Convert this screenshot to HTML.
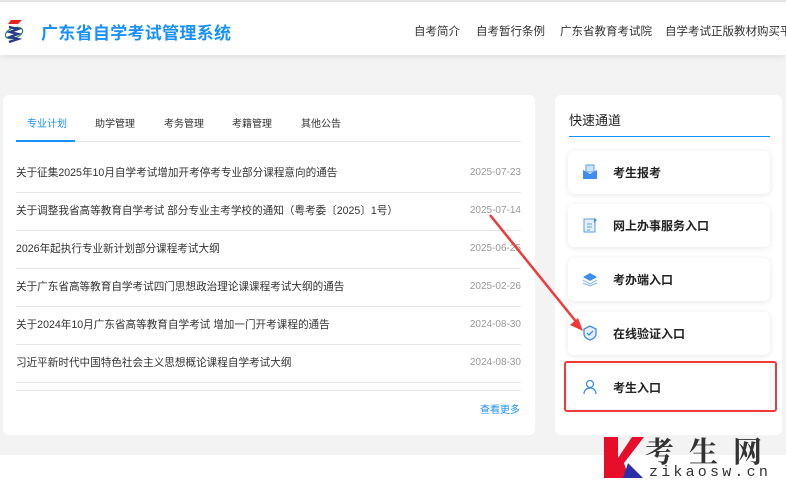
<!DOCTYPE html>
<html><head><meta charset="utf-8"><style>
*{margin:0;padding:0;box-sizing:border-box}
body{width:786px;height:493px;overflow:hidden;background:#fff;font-family:"Liberation Sans","Noto Sans CJK SC",sans-serif;position:relative}
.bg{position:absolute;left:0;top:55px;width:786px;height:400px;background:#f3f3f3}
.hdr{position:absolute;left:0;top:0;width:786px;height:55px;background:#fff;border-top:2px solid #e4e4e4;box-shadow:0 2px 6px rgba(0,0,0,.08)}
.title{position:absolute;left:41px;top:17px;font-size:17px;color:#1890ff;font-weight:bold;letter-spacing:.3px}
.nav{position:absolute;top:21px;font-size:11.5px;color:#333;white-space:nowrap}
.card{position:absolute;background:#fff;border-radius:6px}
.tab{position:absolute;top:115px;font-size:10px;color:#333}
.row{position:absolute;left:16px;width:505px;height:38px;border-bottom:1px solid #e6e6e6;font-size:10.6px;color:#333}
.row span{position:absolute;left:0;top:10px}
.row i{position:absolute;right:0;top:12px;font-style:normal;color:#999;font-size:10px}
.btn{position:absolute;left:568px;width:202px;height:43px;background:#fff;border-radius:6px;box-shadow:0 1px 6px rgba(0,0,0,.1);font-size:12px;color:#222;font-weight:bold}
.btn span{position:absolute;left:45px;top:13px}
.btn svg{position:absolute;left:14px;top:13px}
</style></head><body>
<div class="bg"></div>
<div class="hdr">
<svg style="position:absolute;left:3px;top:17px" width="22" height="24" viewBox="0 0 22 24"><path d="M8 1h11l-4 4H5z" fill="#e52521"/><ellipse cx="11" cy="14" rx="9" ry="5" fill="none" stroke="#2a8a4a" stroke-width="1.2" transform="rotate(-20 11 14)"/><path d="M6 8l9 2-8 3 8 2-8 3 8 2-9 3" fill="none" stroke="#2b3a8c" stroke-width="2.4"/></svg>
<div class="title">广东省自学考试管理系统</div>
<div class="nav" style="left:414px">自考简介</div>
<div class="nav" style="left:476px">自考暂行条例</div>
<div class="nav" style="left:560px">广东省教育考试院</div>
<div class="nav" style="left:665px">自学考试正版教材购买平台</div>
</div>
<div class="card" style="left:3px;top:95px;width:532px;height:340px"></div>
<div class="tab" style="left:27px;color:#1890ff">专业计划</div>
<div class="tab" style="left:95px">助学管理</div>
<div class="tab" style="left:164px">考务管理</div>
<div class="tab" style="left:232px">考籍管理</div>
<div class="tab" style="left:301px">其他公告</div>
<div style="position:absolute;left:16px;top:141px;width:505px;height:1px;background:#e6e6e6"></div>
<div style="position:absolute;left:16px;top:140px;width:59px;height:2px;background:#1890ff"></div>
<div class="row" style="top:155px"><span>关于征集2025年10月自学考试增加开考停考专业部分课程意向的通告</span><i>2025-07-23</i></div>
<div class="row" style="top:193px"><span>关于调整我省高等教育自学考试 部分专业主考学校的通知（粤考委〔2025〕1号）</span><i>2025-07-14</i></div>
<div class="row" style="top:231px"><span>2026年起执行专业新计划部分课程考试大纲</span><i>2025-06-25</i></div>
<div class="row" style="top:269px"><span>关于广东省高等教育自学考试四门思想政治理论课课程考试大纲的通告</span><i>2025-02-26</i></div>
<div class="row" style="top:307px"><span>关于2024年10月广东省高等教育自学考试 增加一门开考课程的通告</span><i>2024-08-30</i></div>
<div class="row" style="top:345px"><span>习近平新时代中国特色社会主义思想概论课程自学考试大纲</span><i>2024-08-30</i></div>
<div style="position:absolute;left:16px;top:390px;width:505px;height:1px;background:#e6e6e6"></div>
<div style="position:absolute;left:480px;top:401px;font-size:10px;color:#1890ff">查看更多</div>

<div class="card" style="left:555px;top:95px;width:227px;height:340px"></div>
<div style="position:absolute;left:569px;top:110px;font-size:13px;color:#222">快速通道</div>
<div style="position:absolute;left:569px;top:136px;width:201px;height:1px;background:#1890ff"></div>
<div class="btn" style="top:151px"><svg width="16" height="16"><rect x="4" y="1" width="8" height="7" fill="#cfe3fb" stroke="#5a9cf0"/><path d="M1 6l7 4 7-4v9H1z" fill="#3f8df0"/></svg><span>考生报考</span></div>
<div class="btn" style="top:204px"><svg width="16" height="16"><rect x="2" y="2" width="11" height="13" fill="#e6f0fd" stroke="#5a9cf0"/><path d="M5 7h5M5 10h5M5 13h3" stroke="#5a9cf0"/><path d="M12 1l3 2-3 3z" fill="#3f8df0"/></svg><span>网上办事服务入口</span></div>
<div class="btn" style="top:258px"><svg width="16" height="16"><path d="M8 2l7 4-7 4-7-4z" fill="#3f8df0"/><path d="M1 9l7 4 7-4M1 12l7 3 7-3" fill="none" stroke="#7fb3f5"/></svg><span>考办端入口</span></div>
<div class="btn" style="top:312px"><svg width="16" height="16"><path d="M8 1l6 3v5c0 3-3 5-6 6-3-1-6-3-6-6V4z" fill="#e6f0fd" stroke="#3f8df0" stroke-width="1.3"/><path d="M5 8l2 2 4-4" fill="none" stroke="#3f8df0" stroke-width="1.3"/></svg><span>在线验证入口</span></div>
<div class="btn" style="top:366px"><svg width="16" height="16"><circle cx="8" cy="5" r="3.5" fill="none" stroke="#3f8df0" stroke-width="1.3"/><path d="M2 15c0-4 3-6 6-6s6 2 6 6" fill="none" stroke="#3f8df0" stroke-width="1.3"/></svg><span>考生入口</span></div>
<div style="position:absolute;left:564px;top:361px;width:213px;height:51px;border:2px solid #f0393b;border-radius:3px"></div>

<svg style="position:absolute;left:0;top:0" width="786" height="493"><line x1="490" y1="215" x2="578" y2="324" stroke="#f0393b" stroke-width="2.5"/><path d="M583 331l-13-6 8-7z" fill="#f0393b"/>
<path d="M604 437h14v21l14-21h12l-20 26 5 15h-25z" fill="#e60e28"/><path d="M628 463l15 15h-20z" fill="#2a31a8"/></svg>
<div style="position:absolute;left:645px;top:430px;font-family:'Noto Serif CJK SC',serif;font-weight:bold;font-size:29px;color:#333;letter-spacing:15px;white-space:nowrap">考生网</div>
<div style="position:absolute;left:649px;top:464px;font-family:'Liberation Mono',monospace;font-size:15px;color:#333;letter-spacing:3.2px">zikaosw.cn</div>
</body></html>
